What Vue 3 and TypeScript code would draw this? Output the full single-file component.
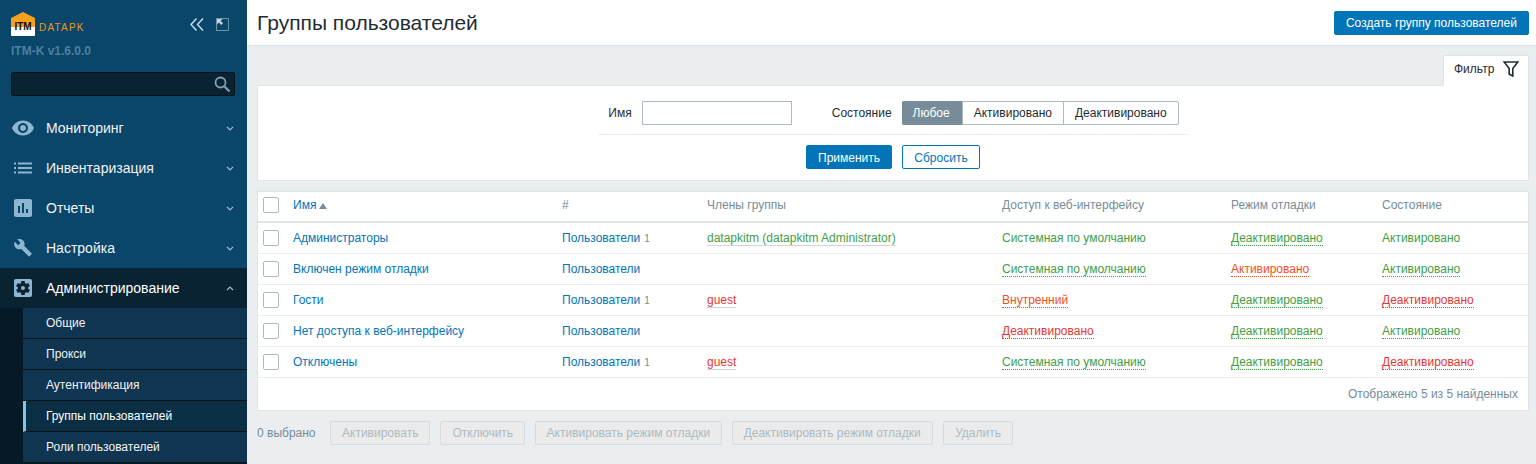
<script setup lang="ts">
interface MenuItem {
  label: string;
  icon: string;
  box?: string;
  open?: boolean;
}

type Tone = 'green' | 'red' | 'orange';

interface Cell {
  text: string;
  tone: Tone;
  dotted?: boolean;
}

interface Row {
  name: string;
  count?: number;
  member?: Cell;
  access: Cell;
  debug: Cell;
  state: Cell;
}

const menu: MenuItem[] = [
  {
    label: 'Мониторинг',
    icon: 'M12 4.5C7 4.5 2.73 7.61 1 12c1.73 4.39 6 7.5 11 7.5s9.27-3.11 11-7.5c-1.73-4.39-6-7.5-11-7.5zM12 17c-2.76 0-5-2.24-5-5s2.24-5 5-5 5 2.24 5 5-2.24 5-5 5zm0-8c-1.66 0-3 1.34-3 3s1.34 3 3 3 3-1.34 3-3-1.34-3-3-3z',
  },
  {
    label: 'Инвентаризация',
    icon: 'M3 6.6h2v2H3zM3 11h2v2H3zM3 15.4h2v2H3zM7 6.6h14v2H7zM7 11h14v2H7zM7 15.4h14v2H7z',
  },
  {
    label: 'Отчеты',
    icon: 'M19 3H5c-1.1 0-2 .9-2 2v14c0 1.1.9 2 2 2h14c1.1 0 2-.9 2-2V5c0-1.1-.9-2-2-2zM9 17H7v-7h2v7zm4 0h-2V7h2v10zm4 0h-2v-4h2v4z',
  },
  {
    label: 'Настройка',
    box: '-3 -2.500 30 30',
    icon: 'M22.7 19l-9.1-9.1c.9-2.3.4-5-1.5-6.9-2-2-5-2.4-7.4-1.3L9 6 6 9 1.6 4.7C.4 7.1.9 10.1 2.9 12.1c1.9 1.9 4.6 2.4 6.9 1.5l9.1 9.1c.4.4 1 .4 1.4 0l2.3-2.3c.5-.4.5-1.1.1-1.4z',
  },
  {
    label: 'Администрирование',
    open: true,
    icon: 'M12 10c-1.1 0-2 .9-2 2s.9 2 2 2 2-.9 2-2-.9-2-2-2zm7-7H5c-1.11 0-2 .9-2 2v14c0 1.1.89 2 2 2h14c1.11 0 2-.9 2-2V5c0-1.1-.89-2-2-2zm-1.75 9c0 .23-.02.46-.05.68l1.48 1.16c.13.11.17.3.08.45l-1.4 2.42c-.09.15-.27.21-.43.15l-1.74-.7c-.36.28-.76.51-1.18.69l-.26 1.85c-.03.17-.18.3-.35.3h-2.8c-.17 0-.32-.13-.35-.29l-.26-1.85c-.43-.18-.82-.41-1.18-.69l-1.74.7c-.16.06-.34 0-.43-.15l-1.4-2.42c-.09-.15-.05-.34.08-.45l1.48-1.16c-.03-.23-.05-.46-.05-.69 0-.23.02-.46.05-.68l-1.48-1.16c-.13-.11-.17-.3-.08-.45l1.4-2.42c.09-.15.27-.21.43-.15l1.74.7c.36-.28.76-.51 1.18-.69l.26-1.85c.03-.17.18-.3.35-.3h2.8c.17 0 .32.13.35.29l.26 1.85c.43.18.82.41 1.18.69l1.74-.7c.16-.06.34 0 .43.15l1.4 2.42c.09.15.05.34-.08.45l-1.48 1.16c.03.23.05.46.05.69z',
  },
];

const subMenu = ['Общие', 'Прокси', 'Аутентификация', 'Группы пользователей', 'Роли пользователей'];

const system: Cell = { text: 'Системная по умолчанию', tone: 'green' };
const systemDotted: Cell = { ...system, dotted: true };
const debugOff: Cell = { text: 'Деактивировано', tone: 'green', dotted: true };
const stateOn: Cell = { text: 'Активировано', tone: 'green', dotted: true };
const stateOff: Cell = { text: 'Деактивировано', tone: 'red', dotted: true };
const guest: Cell = { text: 'guest', tone: 'red' };

const rows: Row[] = [
  {
    name: 'Администраторы',
    count: 1,
    member: { text: 'datapkitm (datapkitm Administrator)', tone: 'green' },
    access: system,
    debug: debugOff,
    state: { text: 'Активировано', tone: 'green' },
  },
  {
    name: 'Включен режим отладки',
    access: systemDotted,
    debug: { text: 'Активировано', tone: 'orange', dotted: true },
    state: stateOn,
  },
  {
    name: 'Гости',
    count: 1,
    member: guest,
    access: { text: 'Внутренний', tone: 'orange', dotted: true },
    debug: debugOff,
    state: stateOff,
  },
  {
    name: 'Нет доступа к веб-интерфейсу',
    access: { text: 'Деактивировано', tone: 'red', dotted: true },
    debug: debugOff,
    state: stateOn,
  },
  {
    name: 'Отключены',
    count: 1,
    member: guest,
    access: systemDotted,
    debug: debugOff,
    state: stateOff,
  },
];

const massActions = [
  'Активировать',
  'Отключить',
  'Активировать режим отладки',
  'Деактивировать режим отладки',
  'Удалить',
];
</script>

<template>
  <div class="page">
    <aside class="sidebar">
      <div class="brand">
        <div class="logo">
          <svg class="logo__mark" width="24" height="24" viewBox="0 0 24 24">
            <path d="M0 6 12 0l12 6v10H0z" fill="#f5a01e" />
            <path d="M0 15h24v8a1 1 0 0 1-1 1H1a1 1 0 0 1-1-1z" fill="#fff" />
            <text x="12" y="18" text-anchor="middle" class="logo__itm">ITM</text>
          </svg>
          <span class="logo__name">DATAPK</span>
        </div>
        <div class="brand__tools">
          <svg width="14" height="13" viewBox="0 0 14 13" fill="none" stroke="#cfe0ea" stroke-width="1.400">
            <path d="M6.500 .5 1 6.500l5.500 6M13 .5 7.500 6.500l5.500 6" />
          </svg>
          <svg width="13" height="13" viewBox="0 0 13 13" fill="none">
            <rect x="0.500" y="0.500" width="12" height="12" stroke="#cfe0ea" stroke-dasharray="1 1" />
            <path d="M1 1h5.500L4.600 2.900 7 5.300 5.300 7 2.900 4.600 1 6.500z" fill="#c3d6e1" />
          </svg>
        </div>
      </div>
      <div class="version">ITM-K v1.6.0.0</div>
      <div class="search">
        <svg width="18" height="18" viewBox="0 0 18 18" fill="none" stroke="#7f9fb2" stroke-width="1.800">
          <circle cx="7.500" cy="7.500" r="5" />
          <path d="m11.500 11.500 5 5" stroke-width="2.200" />
        </svg>
      </div>
      <nav class="menu">
        <div
          v-for="item in menu"
          :key="item.label"
          class="menu__item"
          :class="{ 'menu__item--open': item.open }"
        >
          <svg class="menu__icon" width="24" height="24" :viewBox="item.box ?? '0 0 24 24'">
            <path :d="item.icon" fill="#8fb6d0" />
          </svg>
          <span class="menu__label">{{ item.label }}</span>
          <svg class="menu__chevron" width="8" height="5" viewBox="0 0 8 5" fill="none" stroke="#9fbccd" stroke-width="1.200">
            <path :d="item.open ? 'M1 4l3-3 3 3' : 'M1 1l3 3 3-3'" />
          </svg>
        </div>
      </nav>
      <ul class="submenu">
        <li
          v-for="entry in subMenu"
          :key="entry"
          class="submenu__item"
          :class="{ 'submenu__item--active': entry === 'Группы пользователей' }"
        >
          {{ entry }}
        </li>
      </ul>
    </aside>

    <main class="main">
      <header class="header">
        <h1 class="header__title">Группы пользователей</h1>
        <button class="btn btn--primary">Создать группу пользователей</button>
      </header>

      <div class="content">
        <div class="tabs">
          <div class="tab">
            <span>Фильтр</span>
            <svg width="16" height="16" viewBox="0 0 16 16" fill="none" stroke="#1f2c33" stroke-width="1.600">
              <path d="M1.200 1h13.600L9.800 7.500V15l-3.600-1.800V7.500z" />
            </svg>
          </div>
        </div>

        <section class="filter">
          <div class="filter__fields">
            <label class="filter__label">Имя</label>
            <input class="filter__input" type="text">
            <label class="filter__label filter__label--state">Состояние</label>
            <div class="segment">
              <span class="segment__item segment__item--active">Любое</span>
              <span class="segment__item">Активировано</span>
              <span class="segment__item">Деактивировано</span>
            </div>
          </div>
          <div class="filter__actions">
            <button class="btn btn--primary btn--apply">Применить</button>
            <button class="btn btn--outline">Сбросить</button>
          </div>
        </section>

        <section class="list">
          <table class="table">
            <colgroup>
              <col style="width: 30px">
              <col style="width: 269px">
              <col style="width: 145px">
              <col style="width: 295px">
              <col style="width: 229px">
              <col style="width: 151px">
              <col>
            </colgroup>
            <thead>
              <tr>
                <th><span class="check" /></th>
                <th class="table__sorted">Имя<i class="table__arrow" /></th>
                <th>#</th>
                <th>Члены группы</th>
                <th>Доступ к веб-интерфейсу</th>
                <th>Режим отладки</th>
                <th>Состояние</th>
              </tr>
            </thead>
            <tbody>
              <tr v-for="row in rows" :key="row.name">
                <td><span class="check" /></td>
                <td class="link">{{ row.name }}</td>
                <td>
                  <span class="link">Пользователи</span>
                  <sup v-if="row.count" class="count">{{ row.count }}</sup>
                </td>
                <td>
                  <span v-if="row.member" class="member" :class="`tone-${row.member.tone}`">{{ row.member.text }}</span>
                </td>
                <td v-for="cell in [row.access, row.debug, row.state]" :key="cell.text">
                  <span :class="[`tone-${cell.tone}`, { dotted: cell.dotted }]">{{ cell.text }}</span>
                </td>
              </tr>
            </tbody>
          </table>
          <div class="list__footer">Отображено 5 из 5 найденных</div>
        </section>

        <div class="mass">
          <span class="mass__count">0 выбрано</span>
          <button v-for="action in massActions" :key="action" class="btn btn--disabled" disabled>
            {{ action }}
          </button>
        </div>
      </div>
    </main>
  </div>
</template>

<style>
html,
body {
  margin: 0;
  overflow: hidden;
}
</style>

<style scoped>
.page {
  display: flex;
  height: 464px;
  overflow: hidden;
  font-family: "Liberation Sans", Arial, sans-serif;
  font-size: 12px;
  color: #1f2c33;
  background: #ebeef0;
}

.sidebar {
  flex: 0 0 247px;
  background: #0a466a;
  display: flex;
  flex-direction: column;
}

.brand {
  display: flex;
  align-items: center;
  justify-content: space-between;
  height: 24px;
  padding: 12px 18px 0 11px;
}

.logo {
  display: flex;
  align-items: center;
  gap: 4px;
}

.logo__mark {
  display: block;
}

.logo__itm {
  font-size: 10px;
  font-weight: 700;
  fill: #111;
}

.logo__name {
  font-size: 10px;
  letter-spacing: 1.200px;
  color: #e8981d;
  padding-top: 6px;
}

.brand__tools {
  display: flex;
  align-items: center;
  gap: 12px;
}

.version {
  margin: 8px 0 0 11px;
  line-height: 14px;
  font-weight: 700;
  color: #4f7f9f;
}

.search {
  display: flex;
  align-items: center;
  justify-content: flex-end;
  box-sizing: border-box;
  height: 24px;
  margin: 14px 12px 0 11px;
  padding-right: 3px;
  background: #0a2332;
  border: 1px solid #05141d;
  border-radius: 2px;
}

.menu {
  margin-top: 12px;
}

.menu__item {
  display: flex;
  align-items: center;
  height: 40px;
  padding-left: 11px;
  color: #f2f2f2;
}

.menu__item--open {
  background: #0a2332;
  color: #fff;
}

.menu__icon {
  flex: none;
}

.menu__label {
  margin-left: 11px;
  font-size: 14px;
}

.menu__chevron {
  margin-left: auto;
  margin-right: 13px;
}

.submenu {
  flex: 1;
  margin: 0;
  padding: 0 0 0 23px;
  list-style: none;
  background: #051a24;
}

.submenu__item {
  box-sizing: border-box;
  height: 31px;
  line-height: 30px;
  padding-left: 23px;
  color: #f2f2f2;
  background: #0f3551;
  border-bottom: 1px solid #05141d;
}

.submenu__item--active {
  color: #fff;
  background: #0a2f45;
  padding-left: 20px;
  border-left: 3px solid #7fc4ee;
}

.main {
  flex: 1;
  min-width: 0;
}

.header {
  display: flex;
  align-items: center;
  justify-content: space-between;
  box-sizing: border-box;
  height: 46px;
  padding: 0 7px 0 10px;
  background: #fff;
  border-bottom: 1px solid #dfe4e7;
}

.header__title {
  margin: 0;
  font-size: 21px;
  font-weight: 400;
  color: #1f2c33;
}

.content {
  padding: 9px 7px 0 10px;
}

.tabs {
  display: flex;
  justify-content: flex-end;
}

.tab {
  display: flex;
  align-items: center;
  justify-content: space-between;
  box-sizing: border-box;
  width: 86px;
  height: 31px;
  margin-bottom: -1px;
  padding: 0 9px 5px 10px;
  background: #fff;
  border: 1px solid #dfe4e7;
  border-bottom: 0;
  position: relative;
  z-index: 1;
}

.filter {
  box-sizing: border-box;
  height: 96px;
  background: #fff;
  border: 1px solid #dfe4e7;
}

.filter__fields {
  display: flex;
  align-items: center;
  justify-content: center;
  width: 589px;
  height: 24px;
  margin: 15px auto 0;
  padding: 0 0 9px 1px;
  border-bottom: 1px solid #ebeef0;
}

.filter__label {
  margin-right: 10px;
}

.filter__label--state {
  margin-left: 40px;
}

.filter__input {
  box-sizing: border-box;
  width: 150px;
  height: 24px;
  background: #fff;
  border: 1px solid #acbbc2;
  outline: none;
}

.segment {
  display: flex;
  height: 24px;
  box-sizing: border-box;
  border: 1px solid #acbbc2;
  border-radius: 2px;
}

.segment__item {
  display: flex;
  align-items: center;
  padding: 0 11px;
  border-left: 1px solid #acbbc2;
}

.segment__item:first-child {
  border-left: 0;
}

.segment__item--active {
  margin: -1px 0 -1px -1px;
  padding: 0 12px 0 11px;
  color: #fff;
  background: #768d99;
  border-radius: 2px 0 0 2px;
}

.filter__actions {
  display: flex;
  justify-content: center;
  gap: 10px;
  margin-top: 10px;
}

.btn {
  box-sizing: border-box;
  height: 24px;
  padding: 0 11px;
  font-family: inherit;
  font-size: 12px;
  border-radius: 2px;
  border: 1px solid transparent;
}

.btn--primary {
  color: #fff;
  background: #0275b8;
  border-color: #0275b8;
}

.btn--apply {
  width: 86px;
  padding-top: 1px;
}

.btn--outline {
  width: 78px;
  padding-top: 1px;
  color: #0275b8;
  background: #fff;
  border-color: #0275b8;
}

.btn--disabled {
  color: #acbbc2;
  background: #ebebeb;
  border-color: #d5dbdf;
}

.list {
  margin-top: 10px;
  background: #fff;
  border: 1px solid #dfe4e7;
}

.table {
  width: 100%;
  table-layout: fixed;
  border-collapse: collapse;
}

.table th {
  box-sizing: border-box;
  height: 30px;
  padding: 0 5px 3px;
  text-align: left;
  font-weight: 400;
  color: #768d99;
  border-bottom: 2px solid #dfe4e7;
}

.table td {
  box-sizing: border-box;
  height: 31px;
  padding: 0 5px;
  border-bottom: 1px solid #ebeef0;
}

.check {
  display: block;
  box-sizing: border-box;
  width: 16px;
  height: 16px;
  background: #fff;
  border: 1px solid #acbbc2;
  border-radius: 2px;
}

.table__sorted {
  color: #0275b8 !important;
}

.table__arrow {
  display: inline-block;
  margin-left: 3px;
  border-left: 4px solid transparent;
  border-right: 4px solid transparent;
  border-bottom: 6px solid #768d99;
}

.link {
  color: #0275b8;
}

.count {
  margin-left: 4px;
  font-size: 10px;
  line-height: 0;
  vertical-align: baseline;
  color: #768d99;
}

.tone-green {
  color: #429e47;
}

.tone-red {
  color: #e33734;
}

.tone-orange {
  color: #f24f1d;
}

.member {
  border-bottom: 1px solid #cdd6db;
}

.dotted {
  border-bottom: 1px dotted currentColor;
}

.list__footer {
  height: 32px;
  line-height: 32px;
  padding-right: 10px;
  text-align: right;
  color: #768d99;
}

.mass {
  display: flex;
  align-items: center;
  gap: 10px;
  margin-top: 10px;
}

.mass__count {
  width: 63px;
  color: #768d99;
}

.mass .btn:nth-child(4) {
  padding: 0 10.500px;
}

.mass .btn:last-child {
  padding: 0 11.500px;
}
</style>
